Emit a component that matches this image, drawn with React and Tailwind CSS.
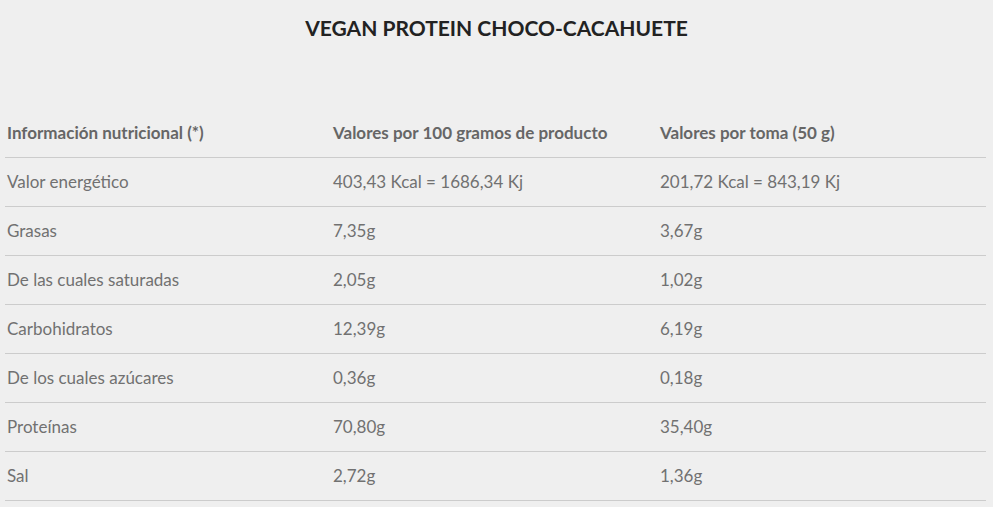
export default function App() {
  const rows = [
    ["Valor energético", "403,43 Kcal = 1686,34 Kj", "201,72 Kcal = 843,19 Kj"],
    ["Grasas", "7,35g", "3,67g"],
    ["De las cuales saturadas", "2,05g", "1,02g"],
    ["Carbohidratos", "12,39g", "6,19g"],
    ["De los cuales azúcares", "0,36g", "0,18g"],
    ["Proteínas", "70,80g", "35,40g"],
    ["Sal", "2,72g", "1,36g"],
  ];
  const font = { fontFamily: "Lato, 'Open Sans', sans-serif" };
  return (
    <div className="w-[993px] h-[507px] bg-[#efefef] overflow-hidden" style={font}>
      <h2 className="text-center text-[21px] leading-[28px] font-bold text-[#222] pt-[14px]">
        VEGAN PROTEIN CHOCO-CACAHUETE
      </h2>
      <div className="mt-[67px] ml-[5px] w-[981px]">
        <div className="grid grid-cols-3 h-[49px] items-center border-b border-[#cccccc] text-[17px] font-bold text-[#666]">
          <div className="pl-[2px]">Información nutricional (*)</div>
          <div className="pl-[1px]">Valores por 100 gramos de producto</div>
          <div className="pl-[1px]">Valores por toma (50 g)</div>
        </div>
        {rows.map((r) => (
          <div key={r[0]} className="grid grid-cols-3 h-[49px] items-center border-b border-[#cccccc] text-[17px] text-[#717171]">
            <div className="pl-[2px]">{r[0]}</div>
            <div className="pl-[1px]">{r[1]}</div>
            <div className="pl-[1px]">{r[2]}</div>
          </div>
        ))}
      </div>
    </div>
  );
}
